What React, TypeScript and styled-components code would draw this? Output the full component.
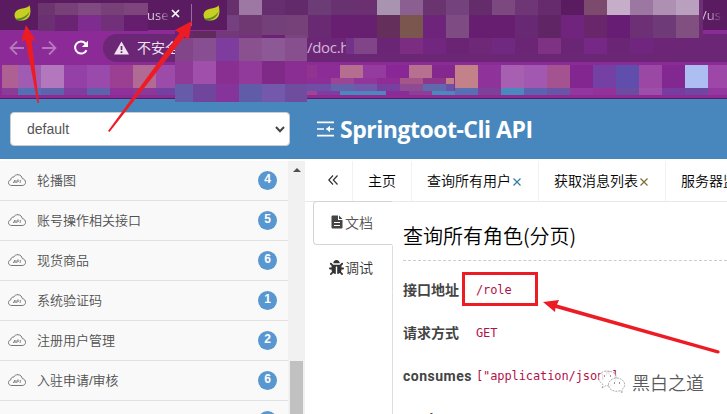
import React from 'react';
import styled, { createGlobalStyle } from 'styled-components';
import { FaBug } from 'react-icons/fa';

const cjk = '"Noto Sans CJK SC", sans-serif';

const GlobalStyle = createGlobalStyle`
  * { box-sizing: border-box; }
  body { margin: 0; overflow: hidden; font-family: "Liberation Sans", ${cjk}; }
`;

const Page = styled.div`
  position: relative;
  width: 727px;
  height: 414px;
  overflow: hidden;
  background: #fff;
`;

/* ---------- browser chrome ---------- */

const Chrome = styled.div`
  position: relative;
  height: 99px;
  background: #8c2a97;
  border-bottom: 1px solid #5a1b61;
`;

const TabStrip = styled.div`
  display: flex;
  align-items: center;
  height: 30px;
  background: #5a1b61;
  color: #d9c6dc;
  font: 13px/26px "Open Sans", sans-serif;
`;

const TabCell = styled.div<{ $w: number; $pad: number; $line?: boolean }>`
  display: flex;
  align-items: center;
  flex: none;
  width: ${p => p.$w}px;
  height: 22px;
  padding-left: ${p => p.$pad}px;
  border-right: ${p => (p.$line ? '1px solid #9a6aa0' : '0')};
`;

const TabText = styled.span<{ $gap: number; $w: number }>`
  width: ${p => p.$w}px;
  margin-left: ${p => p.$gap}px;
  white-space: nowrap;
  -webkit-mask-image: linear-gradient(90deg, #000 45%, transparent 100%);
`;

const CloseGlyph = styled.svg`
  margin-top: -4px;
`;

const Toolbar = styled.div`
  display: flex;
  align-items: center;
  height: 36px;
  padding-left: 8px;
`;

const NavIcon = styled.svg<{ $gap?: number }>`
  flex: none;
  margin-right: ${p => p.$gap ?? 0}px;
`;

const AddressBar = styled.div`
  display: flex;
  align-items: center;
  flex: 1;
  height: 28px;
  padding-left: 11px;
  border-radius: 14px 0 0 14px;
  background: #6c2676;
  color: #eee3ef;
  font: 14px/18px ${cjk};
`;

const Warn = styled.span`
  width: 170px;
  margin: -2px 0 0 8px;
  white-space: nowrap;
`;

const Url = styled.span`
  margin-top: -2px;
  color: #d2b8d6;
  font: 15px "Open Sans", sans-serif;
  letter-spacing: -0.3px;
`;

const MosaicGrid = styled.div<{ $x: number; $y: number; $cols: string; $rows: string }>`
  position: absolute;
  z-index: 2;
  left: ${p => p.$x}px;
  top: ${p => p.$y}px;
  display: grid;
  grid-template-columns: ${p => p.$cols};
  grid-template-rows: ${p => p.$rows};
`;

const Cell = styled.i<{ $c: string }>`
  background: ${p => p.$c};
`;

type MosaicData = { x: number; y: number; cols: number[]; rows: number[]; colors: string };

const rep = (n: number, v = 23) => Array<number>(n).fill(v);

const mosaics: MosaicData[] = [
  { x: 38, y: 3, cols: [17, 23, 23, 23, 24], rows: [12, 16],
    colors: '6c3570 774077 7e4a7f 774077 7e457c 6a3072 6b2474 7e2c90 73307a 651d6e' },
  { x: 227, y: 0, cols: [12, ...rep(20), 4], rows: [15, 23],
    colors: `66306c 9c78a2 672e6f 622a6a 6c3c77 68316f 6a3070 a893b0 8b5f90 69346f 74427c 652c6c 7b4880 6e3674 662b6d 5a1b61 7b4a6c c6aec8 9c77a2 ae90b3 b9a0bf 6f2f77
      754080 703873 74407a 764179 692a73 681f72 672070 652f5b 7a564e 6e247a 7e4c83 671d70 671e70 692874 5f2564 70247e 69266b 671d73 6d3074 6f3a78 815080 6b2a72` },
  { x: 346, y: 38, cols: [8, ...rep(14), 27], rows: [16],
    colors: '73328a 804488 6a2574 7c2d82 73267f 692573 6f2778 702980 6b2575 7f3183 6b2575 752886 6b2575 70267f 6c2577 6c2676' },
  { x: 175, y: 31, cols: [18, 23, 23], rows: [7], colors: '6b2474 612a5c 73387c' },
  { x: 239, y: 35, cols: [23, 23, 22], rows: [3], colors: '74307c 6e2074 7a4480' },
  { x: 175, y: 38, cols: [18, 23, 23, 23, 23, 22], rows: [23, 23, 18],
    colors: `824688 884e92 7e3c9e 89528f 8c5996 874f8e
      8e3a96 a050ab 892f92 913a9c 802a88 8b2e93
      655ba9 6f469b 84349a 605ca8 7458ac 6e4c9e` },
  { x: 2, y: 65, cols: [16, ...rep(6), 19], rows: [23, 7],
    colors: `ae6093 a05bb3 b277bd 9440a6 9a4aaa 9a3f92 b06a93 9c4ba9
      8a3c96 556fb3 5e63ae 803c9f 5d62ab 8e329a 8b3896 7342a0` },
  { x: 307, y: 65, cols: [10, 23, 23, 23, 23, 23, 23], rows: [13],
    colors: '90348f 8c2d97 b66e90 953ba0 8a2796 b87090 85288e' },
  { x: 307, y: 78, cols: [24, 23, 23, 23, 23, 23, 8], rows: [6, 7],
    colors: '8c2f97 9d4595 92369a 8d2d95 a65588 8f368c c08084 6e4ea6 6362ab 7257aa 783ea0 8f4a94 6068ae 6e50a6' },
  { x: 307, y: 91, cols: [10, 23, 46, 23, 23, 23], rows: [4],
    colors: 'a04494 803ca0 4a88be 8a2c98 8e3e95 4a88be' },
  { x: 455, y: 65, cols: [...rep(11), 19], rows: [23, 7],
    colors: `c38289 8d339a a75fb2 a258b0 a45290 832790 7440a4 604eac 9b48a5 832890 adbff2 9d48a8
      586fb3 7e4099 4a88be 5c62ad 6a54a6 91379e 933299 6b4ca0 9d4ea8 783ca0 6f46a0 94389f` },
];

const px = (a: number[]) => a.map(n => `${n}px`).join(' ');

const Mosaic = ({ x, y, cols, rows, colors }: MosaicData) => (
  <MosaicGrid $x={x} $y={y} $cols={px(cols)} $rows={px(rows)}>
    {colors.split(/\s+/).map((c, i) => <Cell key={i} $c={`#${c}`} />)}
  </MosaicGrid>
);

const LeafSvg = styled.svg`
  flex: none;
  margin-top: -3px;
`;

const Leaf = () => (
  <LeafSvg width="17" height="17" viewBox="0 0 17 17">
    <path d="M15.500 0.300C13 3.800 7 3 3.200 5.200C0 7.200-.2 11.500 2 14L4 15C8 16.400 13 15.500 15.300 11.500C17 8 16.600 3.500 15.500.3Z" fill="#c6cf22" />
    <path d="M1.300 13.800C7 13.500 12.500 11.500 15.500 6.500C14.500 12.500 8 16 2.600 15.300Z" fill="#5a8a26" />
  </LeafSvg>
);

/* ---------- application ---------- */

const Header = styled.header`
  display: flex;
  align-items: center;
  height: 60px;
  padding: 0 10px;
  background: #4787bd;
`;

const Select = styled.div`
  display: flex;
  align-items: center;
  justify-content: space-between;
  width: 280px;
  height: 34px;
  padding: 0 4px 0 16px;
  border: 1px solid #ccc;
  border-radius: 4px;
  background: #fff;
  color: #555;
  font-size: 14px;
`;

const Brand = styled.h1`
  display: flex;
  align-items: center;
  margin: 0 0 0 27px;
  color: #fff;
  font: bold 23px/30px "Open Sans", sans-serif;
  letter-spacing: -0.48px;
  white-space: nowrap;
`;

const BrandIcon = styled.svg`
  margin-right: 6px;
`;

const Body = styled.div`
  display: flex;
  height: 253px;
  margin-top: 2px;
`;

const Sidebar = styled.nav`
  width: 288px;
  overflow: hidden;
  background: #f9f9f9;
`;

const MenuItem = styled.div`
  display: flex;
  align-items: center;
  height: 40px;
  padding: 0 11px 0 8px;
  border-bottom: 1px solid #e2e2e2;
  color: #505050;
  font-size: 13px;
`;

const MenuText = styled.span`
  flex: 1;
  margin-left: 11px;
  font-family: "Liberation Sans", "Noto Sans CJK SC", sans-serif;
  font-weight: 350;
  line-height: 18px;
`;

const Badge = styled.span`
  width: 19px;
  height: 19px;
  border-radius: 9.5px;
  background: #5897cf;
  color: #fff;
  font: bold 12px/17px "Liberation Sans", sans-serif;
  text-align: center;
`;

const Scrollbar = styled.div`
  display: flex;
  flex-direction: column;
  align-items: center;
  justify-content: space-between;
  width: 17px;
  padding-top: 7px;
  background: #f1f1f1;
`;

const Thumb = styled.div`
  width: 13px;
  height: 53px;
  background: #c1c1c1;
`;

const Main = styled.main`
  display: flex;
  flex-direction: column;
  flex: 1;
  min-width: 0;
`;

const Tabs = styled.div`
  display: flex;
  flex: none;
  height: 41px;
  padding-left: 8px;
  border-bottom: 1px solid #e8e8e8;
  overflow: hidden;
`;

const Tab = styled.div<{ $w: number }>`
  display: flex;
  align-items: center;
  flex: none;
  width: ${p => p.$w}px;
  padding: 0 0 2px 15px;
  border-right: 1px solid #f2f2f2;
  color: #000;
  font: 350 14px ${cjk};
  white-space: nowrap;
`;

const TabClose = styled.svg`
  margin: 3px 0 0 2px;
`;

const Content = styled.div`
  display: flex;
  flex: 1;
  padding-left: 8px;
`;

const SideTabs = styled.div`
  display: flex;
  flex-direction: column;
  width: 80px;
  margin-top: -1px;
`;

const SideTab = styled.div<{ $active?: boolean }>`
  display: flex;
  align-items: center;
  flex: none;
  height: ${p => (p.$active ? 44 : 48)}px;
  padding-left: ${p => (p.$active ? 17 : 15)}px;
  padding-bottom: ${p => (p.$active ? 2 : 4)}px;
  border: 1px solid ${p => (p.$active ? '#d4d4d4' : 'transparent')};
  border-right-color: ${p => (p.$active ? '#fff' : '#ddd')};
  border-radius: ${p => (p.$active ? '4px 0 0 4px' : '0')};
  color: ${p => (p.$active ? '#555' : '#333')};
  font: 350 14px ${cjk};
  gap: ${p => (p.$active ? 2 : 1)}px;
`;

const SideRest = styled.div`
  flex: 1;
  border-right: 1px solid #ddd;
`;

const Detail = styled.section`
  flex: 1;
  padding: 16px 0 0 10px;
  min-width: 0;
`;

const Heading = styled.h2`
  height: 43px;
  margin: 0;
  border-bottom: 1px dashed #ccc;
  color: #000;
  font: 350 20px/35px "Noto Sans CJK SC", sans-serif;
`;

const Field = styled.div`
  display: flex;
  align-items: center;
  height: 43px;
  white-space: nowrap;
`;

const Fields = styled.div`
  padding-top: 7px;
`;

const Label = styled.b`
  width: 73px;
  color: #444;
  font: bold 14px/20px Roboto, ${cjk};
`;

const LatinLabel = styled(Label)`
  letter-spacing: 0.5px;
`;

const Code = styled.code`
  color: #b2124b;
  font: 12px "DejaVu Sans Mono", monospace;
  letter-spacing: -0.1px;
`;

/* ---------- annotations over the page ---------- */

const Marker = styled.div`
  position: absolute;
  z-index: 3;
  left: 462px;
  top: 272px;
  width: 76px;
  height: 34px;
  border: 3px solid #ed1c24;
`;

const Arrows = styled.svg`
  position: absolute;
  z-index: 4;
  left: 0;
  top: 0;
`;

const Watermark = styled.div`
  position: absolute;
  z-index: 5;
  left: 597px;
  top: 367px;
  display: flex;
  align-items: center;
  gap: 6px;
  color: #5a5a5a;
  font: 350 18px/30px ${cjk};
  white-space: nowrap;
`;

const CloudIcon = () => (
  <svg width="18" height="14" viewBox="0 0 18 14" fill="none">
    <path d="M4 11.500C1.500 11.500.5 10.300.5 8.800C.5 7 1.500 6 3 5.700C2.800 4 4 2.800 5.700 3.200C6.500 1.300 8 .6 10 .7C12.500.9 14 2.500 14.200 4.500C16.500 5 17.500 6.500 17.500 8.300C17.500 10.300 16 11.500 14 11.500Z" stroke="#777" />
    <path d="M5.200 9L7 6L7.300 9M5.900 8H7.200M8.500 9L9.200 6H10.300C11.500 6 11 7.700 9.900 7.700H8.900M12 9L12.700 6" stroke="#777" strokeWidth=".8" />
  </svg>
);

const menu: [string, number][] = [
  ['轮播图', 4], ['账号操作相关接口', 5], ['现货商品', 6], ['系统验证码', 1],
  ['注册用户管理', 2], ['入驻申请/审核', 6], ['', 6],
];

const fields: [string, string][] = [
  ['接口地址', '/role'], ['请求方式', 'GET'], ['consumes', '["application/json"]'], ['produces', ''],
];

const Cross = ({ color }: { color: string }) => (
  <TabClose width="8" height="8" viewBox="0 0 8 8">
    <path d="M.5.5L7.500 7.500M7.500.5L.5 7.500" stroke={color} strokeWidth="1.200" />
  </TabClose>
);

export default function App() {
  return (
    <Page>
      <GlobalStyle />
      <Chrome>
        <TabStrip>
          <TabCell $w={192} $pad={14} $line>
            <Leaf />
            <TabText $gap={116} $w={24}>use</TabText>
            <CloseGlyph width="9" height="9" viewBox="0 0 9 9">
              <path d="M1 1L8 8M8 1L1 8" stroke="#fff" strokeWidth="1.700" />
            </CloseGlyph>
          </TabCell>
          <TabCell $w={535} $pad={11}>
            <Leaf />
            <TabText $gap={474} $w={29}>n/use</TabText>
          </TabCell>
        </TabStrip>
        <Toolbar>
          <NavIcon width="18" height="16" viewBox="0 0 18 16" $gap={14} fill="none" stroke="#b777bf" strokeWidth="1.800">
            <path d="M16 8H3M9 1.500L2.500 8L9 14.500" />
          </NavIcon>
          <NavIcon width="18" height="16" viewBox="0 0 18 16" $gap={15} fill="none" stroke="#b777bf" strokeWidth="1.800">
            <path d="M2 8H15M9 1.500L15.500 8L9 14.500" />
          </NavIcon>
          <NavIcon width="17" height="16" viewBox="0 0 17 16" $gap={13}>
            <path d="M13.500 10.200A6 6 0 1 1 12.500 3.500L14 5" fill="none" stroke="#fff" strokeWidth="2" />
            <path d="M15 .8V7H8.800Z" fill="#fff" />
          </NavIcon>
          <AddressBar>
            <svg width="15" height="14" viewBox="0 0 15 14">
              <path d="M7.500.5L15 13.500H0Z" fill="#eee3ef" />
              <path d="M7.500 5V9M7.500 10.300V12" stroke="#6c2676" strokeWidth="1.700" />
            </svg>
            <Warn>不安全</Warn>
            <Url>/doc.h</Url>
          </AddressBar>
        </Toolbar>
        {mosaics.map((m, i) => <Mosaic key={i} {...m} />)}
      </Chrome>

      <Header>
        <Select>
          default
          <svg width="10" height="7" viewBox="0 0 10 7" fill="none">
            <path d="M1 1L5 5.200L9 1" stroke="#444" strokeWidth="2" />
          </svg>
        </Select>
        <Brand>
          <BrandIcon width="17" height="16" viewBox="0 0 17 16" fill="none" stroke="#fff" strokeWidth="1.700">
            <path d="M0 1.300H17M0 8H7M0 14.700H17M9.500 8H17" />
            <path d="M9 8L13 4.800V11.200Z" fill="#fff" stroke="none" />
          </BrandIcon>
          Springtoot-Cli API
        </Brand>
      </Header>

      <Body>
        <Sidebar>
          {menu.map(([name, count], i) => (
            <MenuItem key={i}>
              <CloudIcon />
              <MenuText>{name}</MenuText>
              <Badge>{name ? count : ''}</Badge>
            </MenuItem>
          ))}
        </Sidebar>
        <Scrollbar>
          <svg width="8" height="4" viewBox="0 0 8 4"><path d="M0 4L4 0L8 4Z" fill="#505050" /></svg>
          <Thumb />
        </Scrollbar>
        <Main>
          <Tabs>
            <Tab $w={40}>
              <svg width="10" height="10" viewBox="0 0 10 10" fill="none" stroke="#333" strokeWidth="1.200">
                <path d="M5 .5L.8 5L5 9.500M9.500.5L5.300 5L9.500 9.500" />
              </svg>
            </Tab>
            <Tab $w={59}>主页</Tab>
            <Tab $w={127}>查询所有用户<Cross color="#2f7da6" /></Tab>
            <Tab $w={127}>获取消息列表<Cross color="#7d6e35" /></Tab>
            <Tab $w={127}>服务器监控</Tab>
          </Tabs>
          <Content>
            <SideTabs>
              <SideTab $active>
                <svg width="12" height="14" viewBox="0 0 12 14">
                  <path d="M1.500.5H7V5H11.500V12.500Q11.500 13.500 10.500 13.500H1.500Q.5 13.500.5 12.500V1.500Q.5.5 1.500.5ZM8 .5L11.500 4H8Z" fill="#444" />
                  <path d="M3 7.500H9M3 10.500H9" stroke="#fff" strokeWidth="1.200" />
                </svg>
                文档
              </SideTab>
              <SideTab><FaBug size={15} />调试</SideTab>
              <SideRest />
            </SideTabs>
            <Detail>
              <Heading>查询所有角色(分页)</Heading>
              <Fields>
                {fields.map(([label, value]) => {
                  const L = /^[a-z]/.test(label) ? LatinLabel : Label;
                  return <Field key={label}><L>{label}</L><Code>{value}</Code></Field>;
                })}
              </Fields>
            </Detail>
          </Content>
        </Main>
      </Body>

      <Marker />
      <Arrows width="727" height="414" viewBox="0 0 727 414" fill="#ed1c24">
        <path d="M26 25L36 41L31.500 40L39 103H37.500L25.500 40L21 41.500Z" />
        <path d="M192 21L188.500 40L184.500 36.500L109.500 132L108 131L179.500 33L175 30Z" />
        <path d="M543 302L559 300L557 304.500L719 350.500Q721 353 717.500 353.500L555.500 308L555 312Z" />
      </Arrows>
      <Watermark>
        <svg width="29" height="26" viewBox="0 0 29 26" fill="#fff" fillOpacity=".8" stroke="#999" strokeWidth=".8" strokeDasharray="2 1">
          <path d="M5 19L6 15.500C-2 10 2 2 10 2C17 2 20 6 19 10C19 15 13 17.500 9 16.500Z" />
          <path d="M25 24L23.500 21.500C17 24 11 20 11.500 15.500C12 11 16 9 20 9C28 10 30 17 25 20.500Z" />
          <path d="M7 7H8M13 7H14M17 14H18M22 14H23" stroke="#777" strokeWidth="1.500" />
        </svg>
        黑白之道
      </Watermark>
    </Page>
  );
}
